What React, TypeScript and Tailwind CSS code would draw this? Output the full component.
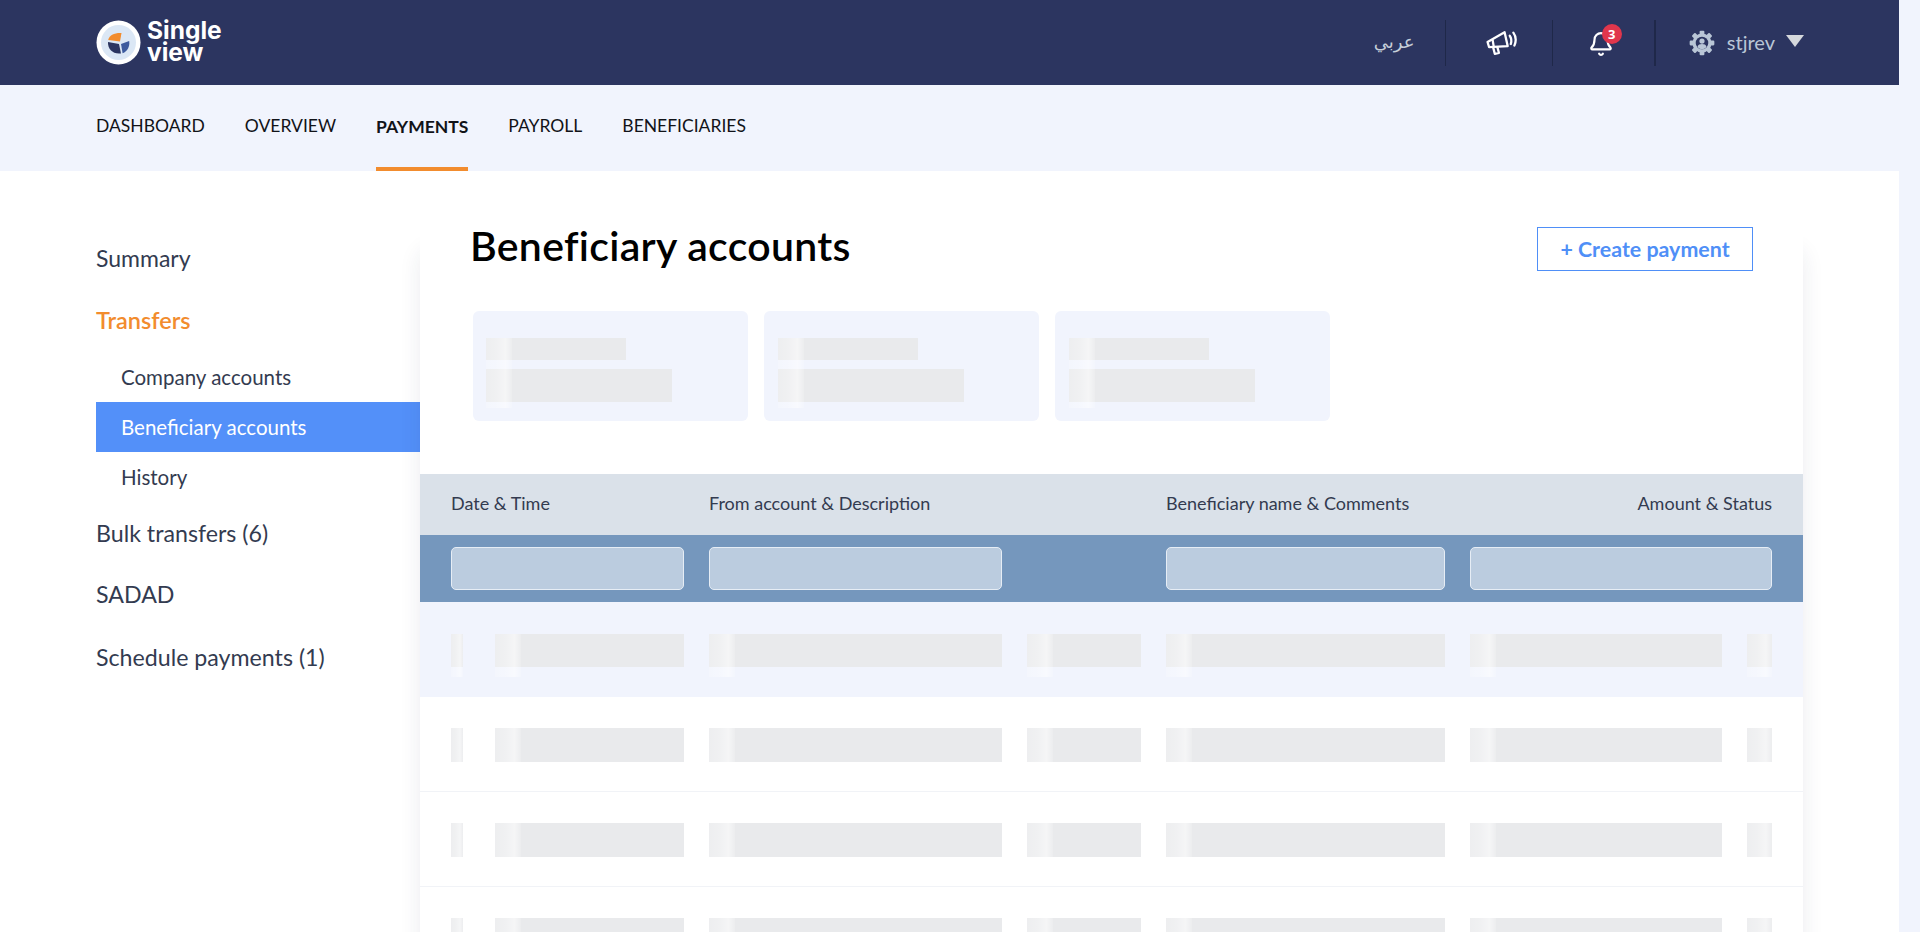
import React from "react";
import { Bell } from "lucide-react";

const teeth = [0, 45, 90, 135, 180, 225, 270, 315];

function Logo() {
  return (
    <svg width="45" height="45" viewBox="0 0 45 45">
      <circle cx="22.5" cy="22.5" r="22" fill="#ffffff" />
      <circle cx="22.5" cy="22.5" r="17.5" fill="#dbe7f5" />
      <path d="M12.2 20 C13 15 19 12.6 25.5 13 L24 21.5 Z" fill="#f28c2e" />
      <path d="M12 22 L23 24 L25 33.4 C17 34.5 11.5 29 12 22 Z" fill="#2b3560" />
      <path d="M25 24 L33.2 21 C34 26.5 31.5 31.5 26.6 33.2 Z" fill="#3c5a9e" />
    </svg>
  );
}

function Megaphone() {
  return (
    <svg width="32" height="26" viewBox="0 0 31 25" fill="none" stroke="#ffffff" strokeWidth="2.2" strokeLinejoin="round" strokeLinecap="round" className="ml-[6px]">
      <path d="M1.5 11.5 L18 2 L21 15.5 L3 16.5 Z" />
      <path d="M6.5 10 L7.5 16" />
      <path d="M7 17 L8.5 23 L12.5 22 L11 16.5" />
      <path d="M23 5.5 Q25.5 9 24 13.5" />
      <path d="M26.5 2.5 Q30.5 8 27.5 15" />
    </svg>
  );
}

function UserGear() {
  return (
    <svg width="26" height="26" viewBox="0 0 24 24">
      {teeth.map((a) => (
        <rect key={a} x="9.8" y="0.6" width="4.4" height="5" rx="1" fill="#b9c6d6" transform={`rotate(${a} 12 12)`} />
      ))}
      <circle cx="12" cy="12" r="8.8" fill="#b9c6d6" />
      <circle cx="12" cy="12" r="5.8" fill="#2c3560" />
      <circle cx="12" cy="10.2" r="2.4" fill="#b9c6d6" />
      <path d="M7.8 15.6 C8.3 13.6 10 13 12 13 C14 13 15.7 13.6 16.2 15.6 C15 17.2 13.5 17.6 12 17.6 C10.5 17.6 9 17.2 7.8 15.6 Z" fill="#b9c6d6" />
    </svg>
  );
}

function Shimmer({ className }: { className: string }) {
  return (
    <div
      className={
        "absolute top-0 bg-[linear-gradient(90deg,rgba(255,255,255,0.2)_0%,rgba(255,255,255,0.32)_40%,rgba(255,255,255,0.55)_75%,rgba(255,255,255,0.15)_100%)] " +
        className
      }
    />
  );
}

function Bar({ width, height, shimmer, first }: { width: string; height: string; shimmer: string; first: boolean }) {
  return (
    <div className={"relative shrink-0 bg-[#e9eaec] " + width + " " + height}>
      <Shimmer className={"left-0 " + shimmer + " " + (first ? "h-[43px]" : "h-full")} />
    </div>
  );
}

function Row({ first, last }: { first?: boolean; last?: boolean }) {
  const h = first ? "h-[33px]" : "h-[34px]";
  const f = !!first;
  return (
    <div
      className={
        "grid grid-cols-[233px_432px_279px_302px] gap-x-[25px] px-[31px] h-[95px] " +
        (first ? "bg-[#f1f4fd] pt-[32px]" : "bg-white pt-[31px] border-b border-[#f1f3f7]") +
        (last ? " border-b-0" : "")
      }
    >
      <div className="flex gap-[32px]">
        <Bar width="w-[12px]" height={h} shimmer="w-[12px]" first={f} />
        <Bar width="w-[189px]" height={h} shimmer="w-[26px]" first={f} />
      </div>
      <div className="flex gap-[25px]">
        <Bar width="w-[293px]" height={h} shimmer="w-[26px]" first={f} />
        <Bar width="w-[114px]" height={h} shimmer="w-[26px]" first={f} />
      </div>
      <div className="flex">
        <Bar width="w-[279px]" height={h} shimmer="w-[26px]" first={f} />
      </div>
      <div className="flex gap-[25px]">
        <Bar width="w-[252px]" height={h} shimmer="w-[26px]" first={f} />
        <Bar width="w-[25px]" height={h} shimmer="w-[25px]" first={f} />
      </div>
    </div>
  );
}

function StatCard({ wide }: { wide?: boolean }) {
  return (
    <div className={"relative w-[275px] h-[110px] rounded-[6px] bg-[#f1f4fd] pt-[27px] " + (wide ? "pl-[14px]" : "pl-[13px]")}>
      <div className="w-[140px] h-[22px] bg-[#e9eaec]" />
      <div className="w-[186px] h-[33px] mt-[9px] bg-[#e9eaec]" />
      <Shimmer className={(wide ? "left-[14px]" : "left-[13px]") + " top-[27px] w-[26px] h-[70px]"} />
    </div>
  );
}

function Filter() {
  return <div className="h-[43px] rounded-[5px] border border-[#e6edf5] bg-[#bbccdf]" />;
}

const navItems = ["DASHBOARD", "OVERVIEW", "PAYMENTS", "PAYROLL", "BENEFICIARIES"];

export default function App() {
  return (
    <div className="h-[932px] w-full overflow-hidden bg-[#f1f4fd] font-['Lato','Liberation_Sans',sans-serif]">
      <div className="w-[1899px] h-full bg-white overflow-hidden">
        <header className="h-[85px] bg-[#2c3560] flex items-center pl-[96px] pr-[95px]">
          <Logo />
          <div className="ml-[6px] text-white font-bold text-[24.5px] leading-[22px] font-['Inter','Lato',sans-serif] -mt-[3px]">
            <div>Single</div>
            <div>view</div>
          </div>
          <div className="ml-auto flex items-center h-[46px]">
            <span className="text-[18px] text-[#c5cdd8] w-[71px] pr-[34px] text-right whitespace-nowrap font-['DejaVu_Sans',sans-serif] mb-[3px]">عربي</span>
            <div className="w-px h-[46px] bg-[#1f2849]" />
            <div className="w-[106px] flex justify-center"><Megaphone /></div>
            <div className="w-px h-[46px] bg-[#1f2849]" />
            <div className="relative w-[101px] flex justify-center">
              <Bell className="w-[26px] h-[26px] text-white mr-[5px] mt-[2px]" strokeWidth={2} />
              <span className="absolute left-[49px] -top-[5px] w-[20px] h-[20px] rounded-full bg-[#e0364c] text-white text-[13px] font-bold leading-[20px] text-center font-['Open_Sans',sans-serif]">3</span>
            </div>
            <div className="w-[2px] h-[46px] bg-[#1f2849]" />
            <div className="flex items-center ml-[33px]"><UserGear /></div>
            <span className="ml-[12px] text-[20px] text-[#b9c6d6] leading-none mb-[2px]">stjrev</span>
            <div className="ml-[11px] w-0 h-0 border-l-[9px] border-r-[9px] border-t-[12px] border-l-transparent border-r-transparent border-t-[#d5d8dc] mb-[3px]" />
          </div>
        </header>

        <nav className="h-[86px] bg-[#f1f4fd] flex pl-[96px] gap-[40px] text-[#111318] text-[17.5px]">
          {navItems.map((n) => (
            <div
              key={n}
              className={
                "h-full flex items-center " +
                (n === "PAYMENTS" ? "font-bold border-b-4 border-[#f28c2e] pt-[3px]" : "pb-[3px]")
              }
            >
              {n}
            </div>
          ))}
        </nav>

        <div className="flex pl-[96px] pr-[96px]">
          <aside className="w-[324px] shrink-0 pt-[70px] text-[#333b50]">
            <div className="text-[23px] leading-[34px]">Summary</div>
            <div className="text-[23.5px] leading-[34px] mt-[28px] font-semibold text-[#f28c2e]">Transfers</div>
            <div className="mt-[15px] text-[20.5px]">
              <div className="h-[50px] pl-[25px] flex items-center">Company accounts</div>
              <div className="h-[50px] pl-[25px] flex items-center bg-[#5390f9] text-white">Beneficiary accounts</div>
              <div className="h-[50px] pl-[25px] flex items-center">History</div>
            </div>
            <div className="text-[23.2px] leading-[34px] mt-[14px]">Bulk transfers (6)</div>
            <div className="text-[23.2px] leading-[34px] mt-[27px]">SADAD</div>
            <div className="text-[23.2px] leading-[34px] mt-[29px]">Schedule payments (1)</div>
          </aside>

          <main className="w-[1383px] mt-[79px] rounded-[10px] bg-white shadow-[0_0_22px_rgba(30,40,80,0.09)]">
            <div className="-mt-[23px] bg-white h-[84px] flex justify-between items-start pl-[50px] pr-[50px]">
              <h1 className="text-[41px] leading-[44px] font-semibold text-black -mt-[3px] tracking-[0.3px]">Beneficiary accounts</h1>
              <button className="w-[216px] h-[44px] border border-[#4f8ff7] text-[#4f8ff7] text-[21.4px] font-bold flex items-center justify-center">
                + Create payment
              </button>
            </div>
            <div className="flex gap-[16px] pl-[53px] h-[163px]">
              <StatCard />
              <StatCard wide />
              <StatCard wide />
            </div>
            <div className="grid grid-cols-[233px_432px_279px_302px] gap-x-[25px] px-[31px] pb-[2px] h-[61px] items-center bg-[#dae1e9] text-[18px] text-[#333b50]">
              <div>Date &amp; Time</div>
              <div>From account &amp; Description</div>
              <div>Beneficiary name &amp; Comments</div>
              <div className="text-right">Amount &amp; Status</div>
            </div>
            <div className="grid grid-cols-[233px_293px_114px_279px_302px] gap-x-[25px] px-[31px] h-[67px] items-center bg-[#7597bd]">
              <Filter />
              <Filter />
              <div />
              <Filter />
              <Filter />
            </div>
            <Row first />
            <Row />
            <Row />
            <Row last />
          </main>
        </div>
      </div>
    </div>
  );
}
